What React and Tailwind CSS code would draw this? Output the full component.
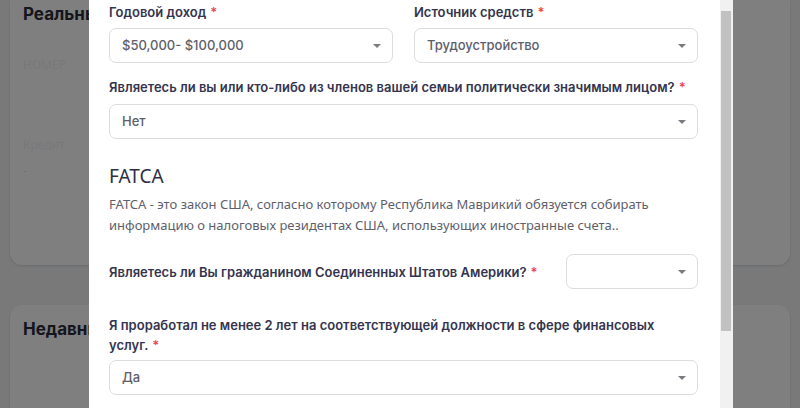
import { useState } from 'react';

const labelFont = { fontFamily: 'Inter, "Liberation Sans", sans-serif' };
const textFont = { fontFamily: '"Noto Sans", "Open Sans", sans-serif' };

function Caret() {
  return (
    <svg className="h-[4px] w-[8px] shrink-0" viewBox="0 0 8 4" fill="#7a7a80">
      <path d="M0 0h8L4 4z" />
    </svg>
  );
}

function SelectBox({ value, className = '' }) {
  return (
    <div
      className={`flex h-[35px] items-center justify-between rounded-[7px] border border-[#dcdce0] bg-white pl-[12px] pr-[11px] ${className}`}
    >
      <span className="text-[13px] font-medium text-[#5e5e6a]" style={labelFont}>
        {value}
      </span>
      <Caret />
    </div>
  );
}

function Label({ children, className = '' }) {
  return (
    <div
      className={`text-[13px] font-semibold leading-[20px] text-[#34344e] ${className}`}
      style={labelFont}
    >
      {children}
      <span className="ml-[4px] text-[#e5484d]">*</span>
    </div>
  );
}

// page behind the modal, only its left strip shows
function BackgroundPage() {
  return (
    <div className="flex h-full flex-col gap-[40px] bg-[#f2f3f5] px-[10px]">
      <div className="h-[265px] shrink-0 rounded-b-xl bg-white px-[13px] pt-[2px] shadow-sm">
        <h2 className="text-[17px] font-bold text-[#2b2b3a]" style={labelFont}>
          Реальный
        </h2>
        <p className="mt-[28px] text-[12px] text-[#f1f1f4]">НОМЕР</p>
        <p className="mt-[62px] text-[12px] text-[#f1f1f4]">Кредит</p>
        <p className="mt-[8px] text-[12px] text-[#e6e6ea]">-</p>
      </div>
      <div className="flex-1 rounded-t-xl bg-white px-[13px] pt-[12px] shadow-sm">
        <h2 className="text-[17px] font-bold text-[#2b2b3a]" style={labelFont}>
          Недавние
        </h2>
      </div>
    </div>
  );
}

export default function App() {
  const [values] = useState({
    income: '$50,000- $100,000',
    source: 'Трудоустройство',
    pep: 'Нет',
    usCitizen: '',
    experience: 'Да',
  });

  return (
    <div className="relative h-[408px] w-[800px] overflow-hidden">
      <BackgroundPage />
      <div className="absolute inset-0 bg-black/50" />
      <div className="absolute left-[89px] top-0 flex h-[408px] w-[644px] bg-white">
        <div className="flex-1 pl-[20px] pr-[22px] pt-[2px]">
          <div className="grid grid-cols-2 gap-x-[21px]">
            <div>
              <Label>Годовой доход</Label>
              <SelectBox value={values.income} className="mt-[6px]" />
            </div>
            <div>
              <Label>Источник средств</Label>
              <SelectBox value={values.source} className="mt-[6px]" />
            </div>
          </div>
          <Label className="mt-[14px]">
            Являетесь ли вы или кто-либо из членов вашей семьи политически значимым лицом?
          </Label>
          <SelectBox value={values.pep} className="mt-[7px]" />

          <h3 className="mt-[24px] text-[19px] leading-[26px] text-[#2f2f45]" style={textFont}>
            FATCA
          </h3>
          <p className="mt-[5px] text-[13px] leading-[21px] text-[#60606c]" style={textFont}>
            FATCA - это закон США, согласно которому Республика Маврикий обязуется собирать
            <br />
            информацию о налоговых резидентах США, использующих иностранные счета..
          </p>

          <div className="mt-[18px] flex items-center">
            <Label className="w-[457px] shrink-0">
              Являетесь ли Вы гражданином Соединенных Штатов Америки?
            </Label>
            <SelectBox value={values.usCitizen} className="w-[132px]" />
          </div>

          <Label className="mt-[26px] whitespace-nowrap">
            Я проработал не менее 2 лет на соответствующей должности в сфере финансовых
            <br />
            услуг.
          </Label>
          <SelectBox value={values.experience} className="mt-[5px]" />
        </div>
        <div className="flex w-[13px] shrink-0 flex-col bg-[#f1f1f1] pt-[11px]">
          <div className="ml-[1px] h-[320px] w-[10px] bg-[#c1c1c1]" />
        </div>
      </div>
    </div>
  );
}
